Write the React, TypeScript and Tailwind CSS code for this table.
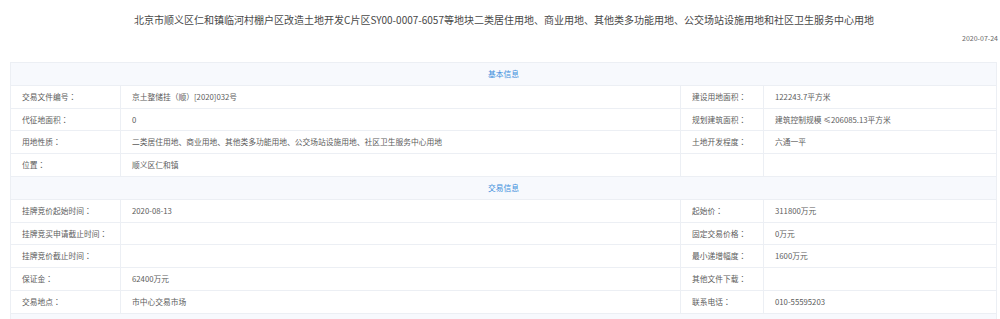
const basic: [string, string, string, string][] = [
  ["交易文件编号：", "京土整储挂（顺）[2020]032号", "建设用地面积：", "122243.7平方米"],
  ["代征地面积：", "0", "规划建筑面积：", "建筑控制规模 ≤206085.13平方米"],
  [
    "用地性质：",
    "二类居住用地、商业用地、其他类多功能用地、公交场站设施用地、社区卫生服务中心用地",
    "土地开发程度：",
    "六通一平",
  ],
  ["位置：", "顺义区仁和镇", "", ""],
];

const trade: [string, string, string, string][] = [
  ["挂牌竞价起始时间：", "2020-08-13", "起始价：", "311800万元"],
  ["挂牌竞买申请截止时间：", "", "固定交易价格：", "0万元"],
  ["挂牌竞价截止时间：", "", "最小递增幅度：", "1600万元"],
  ["保证金：", "62400万元", "其他文件下载：", ""],
  ["交易地点：", "市中心交易市场", "联系电话：", "010-55595203"],
];

function Header({ title }: { title: string }) {
  return (
    <div className="col-span-4 h-[22.8px] flex items-center justify-center bg-[#f7f9fd] border-b border-[#eceff4] text-[#3d8fdc]">
      {title}
    </div>
  );
}

// labels end with a centred full-width colon, as in the original page font
function Label({ text }: { text: string }) {
  if (!text.endsWith("：")) return <>{text}</>;
  return (
    <>
      {text.slice(0, -1)}
      <span className="[font-family:'Noto_Sans_CJK_TC',sans-serif]">：</span>
    </>
  );
}

function Row({ cells }: { cells: [string, string, string, string] }) {
  return (
    <>
      {cells.map((c, i) => (
        <div
          key={i}
          className={`h-[22.8px] flex items-center px-[11px] border-b border-[#eceff4] whitespace-nowrap ${
            i < 3 ? "border-r" : ""
          }`}
        >
          {i % 2 === 0 ? <Label text={c} /> : c}
        </div>
      ))}
    </>
  );
}

export default function App() {
  return (
    <div
      className="w-[1000px] h-[319px] overflow-hidden bg-white text-[#5c5c5c]"
      style={{ fontFamily: '"Noto Sans CJK SC", "Noto Sans", sans-serif' }}
    >
      <div className="ml-[10px] w-[988px]">
        <div className="h-[30px] pt-[12px] flex justify-center text-[10px] leading-[16px] text-[#484848]">
          北京市顺义区仁和镇临河村棚户区改造土地开发C片区SY00-0007-6057等地块二类居住用地、商业用地、其他类多功能用地、公交场站设施用地和社区卫生服务中心用地
        </div>
        <div className="h-[32px] pt-[3px] flex justify-end text-[7px] leading-[10px] text-[#666]">
          2020-07-24
        </div>
        <div className="grid grid-cols-[110px_560px_83px_1fr] border-l border-t border-r border-[#eceff4] text-[7.75px] mr-[1px]">
          <Header title="基本信息" />
          {basic.map((r, i) => (
            <Row key={i} cells={r} />
          ))}
          <Header title="交易信息" />
          {trade.map((r, i) => (
            <Row key={i} cells={r} />
          ))}
          <div className="col-span-4 h-[22.8px] bg-[#f7f9fd]" />
        </div>
      </div>
    </div>
  );
}
